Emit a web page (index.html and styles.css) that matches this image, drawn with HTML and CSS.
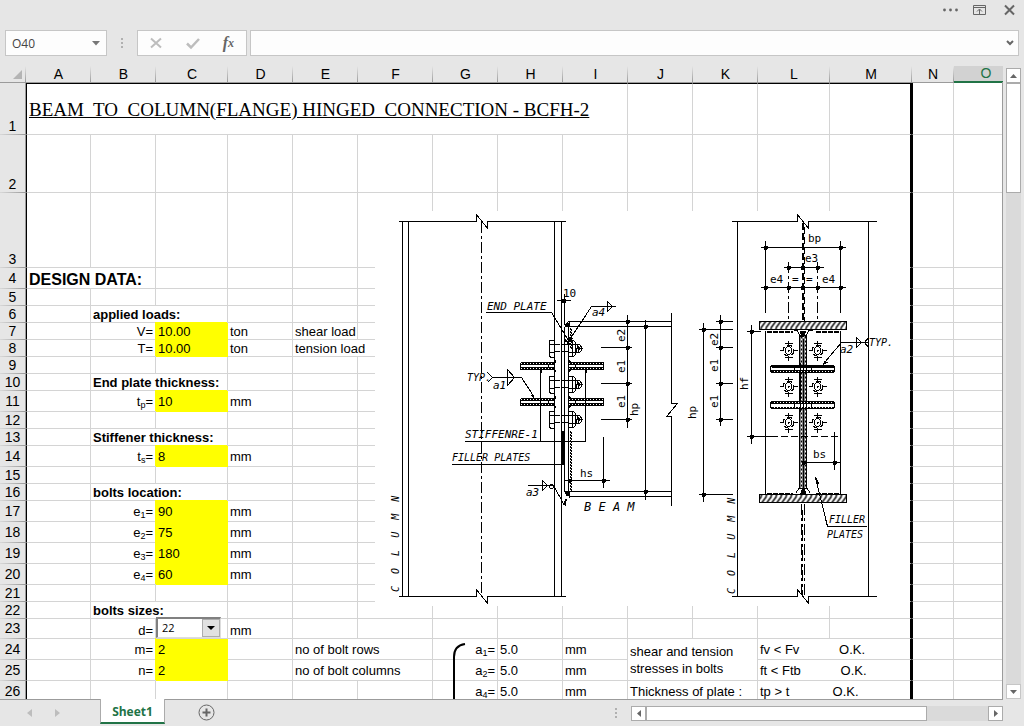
FILE: index.html
```html
<!DOCTYPE html>
<html lang="en">
<head>
<meta charset="utf-8">
<title>Beam to column hinged connection</title>
<link rel="stylesheet" href="styles.css">
</head>
<body>
<header class="titlebar">
  <button class="icon-btn" aria-label="More"><svg width="16" height="16"><g fill="#666"><circle cx="1.500" cy="8" r="1.400"/><circle cx="7.500" cy="8" r="1.400"/><circle cx="13.500" cy="8" r="1.400"/></g></svg></button>
  <button class="icon-btn" aria-label="Ribbon display options"><svg width="16" height="16" fill="none" stroke="#666"><path d="M1.500 3.500h12v9h-12zM1.500 5.500h12M7.500 12V7.500M5 9.500l2.500-2.500L10 9.500"/></svg></button>
  <button class="icon-btn" aria-label="Close"><svg width="16" height="16" fill="none" stroke="#666" stroke-width="2"><path d="M4 3.500l9 9M13 3.500l-9 9"/></svg></button>
</header>

<section class="formula-row">
  <div class="namebox">
    <input class="name-input" aria-label="Name box" value="O40">
    <button class="plain-btn" aria-label="Names"><svg width="8" height="5"><path d="M0 0h8L4 4.500z" fill="#777"/></svg></button>
  </div>
  <svg class="grip" width="2" height="12" fill="#b0b0b0"><path d="M0 1h2v2H0zM0 5h2v2H0zM0 9h2v2H0z"/></svg>
  <div class="fx-group">
    <button class="plain-btn" aria-label="Cancel"><svg width="14" height="14" fill="none" stroke="#bdbdbd" stroke-width="2"><path d="M2 2.500l10 9M12 2.500l-10 9"/></svg></button>
    <button class="plain-btn" aria-label="Enter"><svg width="14" height="14" fill="none" stroke="#bdbdbd" stroke-width="2.500"><path d="M1 7.500l4 4L13 3"/></svg></button>
    <button class="plain-btn fx" aria-label="Insert function">f<small>x</small></button>
  </div>
  <div class="formula">
    <input class="formula-input" aria-label="Formula bar">
    <button class="plain-btn" aria-label="Expand formula bar"><svg width="8" height="6" fill="none" stroke="#666" stroke-width="2"><path d="M1 1l3 3 3-3"/></svg></button>
  </div>
</section>

<main class="workspace">
  <div class="sheet">
    <table class="grid">
      <colgroup>
        <col class="w-head"><col class="w-65"><col class="w-65"><col class="w-72"><col class="w-65"><col class="w-65"><col class="w-75"><col class="w-65"><col class="w-65"><col class="w-65"><col class="w-65"><col class="w-65"><col class="w-72"><col class="w-82"><col class="w-42"><col>
      </colgroup>
      <thead>
        <tr><th class="corner"><svg width="9" height="9"><path d="M9 0v9H0z" fill="#b4b4b4"/></svg></th><th>A</th><th>B</th><th>C</th><th>D</th><th>E</th><th>F</th><th>G</th><th>H</th><th>I</th><th>J</th><th>K</th><th>L</th><th>M</th><th>N</th><th class="active">O</th></tr>
      </thead>
      <tbody>
        <tr class="r-52 first"><th>1</th><td class="a title" colspan="9">BEAM&nbsp; TO&nbsp; COLUMN(FLANGE) HINGED&nbsp; CONNECTION - BCFH-2</td><td></td><td></td><td></td><td class="m"></td><td></td><td></td></tr>
        <tr class="r-58"><th>2</th><td class="a"></td><td></td><td></td><td></td><td></td><td></td><td></td><td></td><td></td><td></td><td></td><td></td><td class="m"></td><td></td><td></td></tr>
        <tr class="r-75"><th>3</th><td class="a"></td><td></td><td></td><td></td><td></td><td></td><td></td><td></td><td></td><td></td><td></td><td></td><td class="m"></td><td></td><td></td></tr>
        <tr class="r-21"><th>4</th><td class="a heading" colspan="2">DESIGN DATA:</td><td></td><td></td><td></td><td></td><td></td><td></td><td></td><td></td><td></td><td></td><td class="m"></td><td></td><td></td></tr>
        <tr><th>5</th><td class="a"></td><td></td><td></td><td></td><td></td><td></td><td></td><td></td><td></td><td></td><td></td><td></td><td class="m"></td><td></td><td></td></tr>
        <tr><th>6</th><td class="a"></td><td class="b" colspan="2">applied loads:</td><td></td><td></td><td></td><td></td><td></td><td></td><td></td><td></td><td></td><td class="m"></td><td></td><td></td></tr>
        <tr><th>7</th><td class="a"></td><td class="r">V=</td><td class="y">10.00</td><td>ton</td><td>shear load</td><td></td><td></td><td></td><td></td><td></td><td></td><td></td><td class="m"></td><td></td><td></td></tr>
        <tr><th>8</th><td class="a"></td><td class="r">T=</td><td class="y">10.00</td><td>ton</td><td colspan="2">tension load</td><td></td><td></td><td></td><td></td><td></td><td></td><td class="m"></td><td></td><td></td></tr>
        <tr><th>9</th><td class="a"></td><td></td><td></td><td></td><td></td><td></td><td></td><td></td><td></td><td></td><td></td><td></td><td class="m"></td><td></td><td></td></tr>
        <tr><th>10</th><td class="a"></td><td class="b" colspan="2">End plate thickness:</td><td></td><td></td><td></td><td></td><td></td><td></td><td></td><td></td><td></td><td class="m"></td><td></td><td></td></tr>
        <tr class="r-21"><th>11</th><td class="a"></td><td class="r">t<sub>p</sub>=</td><td class="y">10</td><td>mm</td><td></td><td></td><td></td><td></td><td></td><td></td><td></td><td></td><td class="m"></td><td></td><td></td></tr>
        <tr><th>12</th><td class="a"></td><td></td><td></td><td></td><td></td><td></td><td></td><td></td><td></td><td></td><td></td><td></td><td class="m"></td><td></td><td></td></tr>
        <tr><th>13</th><td class="a"></td><td class="b" colspan="2">Stiffener thickness:</td><td></td><td></td><td></td><td></td><td></td><td></td><td></td><td></td><td></td><td class="m"></td><td></td><td></td></tr>
        <tr class="r-21"><th>14</th><td class="a"></td><td class="r">t<sub>s</sub>=</td><td class="y">8</td><td>mm</td><td></td><td></td><td></td><td></td><td></td><td></td><td></td><td></td><td class="m"></td><td></td><td></td></tr>
        <tr><th>15</th><td class="a"></td><td></td><td></td><td></td><td></td><td></td><td></td><td></td><td></td><td></td><td></td><td></td><td class="m"></td><td></td><td></td></tr>
        <tr><th>16</th><td class="a"></td><td class="b" colspan="2">bolts location:</td><td></td><td></td><td></td><td></td><td></td><td></td><td></td><td></td><td></td><td class="m"></td><td></td><td></td></tr>
        <tr class="r-21"><th>17</th><td class="a"></td><td class="r">e<sub>1</sub>=</td><td class="y">90</td><td>mm</td><td></td><td></td><td></td><td></td><td></td><td></td><td></td><td></td><td class="m"></td><td></td><td></td></tr>
        <tr class="r-21"><th>18</th><td class="a"></td><td class="r">e<sub>2</sub>=</td><td class="y">75</td><td>mm</td><td></td><td></td><td></td><td></td><td></td><td></td><td></td><td></td><td class="m"></td><td></td><td></td></tr>
        <tr class="r-21"><th>19</th><td class="a"></td><td class="r">e<sub>3</sub>=</td><td class="y">180</td><td>mm</td><td></td><td></td><td></td><td></td><td></td><td></td><td></td><td></td><td class="m"></td><td></td><td></td></tr>
        <tr class="r-21"><th>20</th><td class="a"></td><td class="r">e<sub>4</sub>=</td><td class="y">60</td><td>mm</td><td></td><td></td><td></td><td></td><td></td><td></td><td></td><td></td><td class="m"></td><td></td><td></td></tr>
        <tr><th>21</th><td class="a"></td><td></td><td></td><td></td><td></td><td></td><td></td><td></td><td></td><td></td><td></td><td></td><td class="m"></td><td></td><td></td></tr>
        <tr><th>22</th><td class="a"></td><td class="b" colspan="2">bolts sizes:</td><td></td><td></td><td></td><td></td><td></td><td></td><td></td><td></td><td></td><td class="m"></td><td></td><td></td></tr>
        <tr class="r-20"><th>23</th><td class="a"></td><td class="r"><label for="bolt-size">d=</label></td><td class="holder"><span class="combo"><select id="bolt-size"><option>22</option><option>24</option></select><span class="combo-arrow"><svg width="8" height="4"><path d="M0 0h8L4 4z"/></svg></span></span></td><td>mm</td><td></td><td></td><td></td><td></td><td></td><td></td><td></td><td></td><td class="m"></td><td></td><td></td></tr>
        <tr class="r-21"><th>24</th><td class="a"></td><td class="r">m=</td><td class="y">2</td><td></td><td colspan="2">no of bolt rows</td><td class="r">a<sub>1</sub>=</td><td>5.0</td><td>mm</td><td class="wrap" colspan="2" rowspan="2">shear and tension stresses in bolts</td><td class="m pre" colspan="2">fv &lt; Fv           O.K.</td><td></td><td></td></tr>
        <tr class="r-21"><th>25</th><td class="a"></td><td class="r">n=</td><td class="y">2</td><td></td><td colspan="2">no of bolt columns</td><td class="r">a<sub>2</sub>=</td><td>5.0</td><td>mm</td><td class="m pre" colspan="2">ft &lt; Ftb           O.K.</td><td></td><td></td></tr>
        <tr class="r-21"><th>26</th><td class="a"></td><td></td><td></td><td></td><td></td><td></td><td class="r">a<sub>4</sub>=</td><td>5.0</td><td>mm</td><td colspan="2">Thickness of plate :</td><td class="m pre" colspan="2">tp &gt; t            O.K.</td><td></td><td></td></tr>
      </tbody>
    </table>

    <svg class="brace" width="14" height="60" fill="none" stroke="#000" stroke-width="2"><path d="M12 1C5 2 1 6 1 14V60"/></svg>

    <svg class="drawing" viewBox="375 211 535 395" width="535" height="395" role="img" aria-label="Connection detail">
      <defs>
        <pattern id="hatch" width="5" height="8" patternUnits="userSpaceOnUse"><path d="M-5 8L1 0M0 8L6 0" stroke="#000" stroke-width="1.500"/></pattern>
        <pattern id="weld" width="4" height="4" patternUnits="userSpaceOnUse"><path d="M0 0h2v2H0zM2 2h2v2H2z"/></pattern>
        <g id="dot"><path d="M-2 -1.500h4v3h-4zM-1.500 -2h3v4h-3z" fill="#000" stroke="none"/></g>
        <g id="bolt">
          <path d="M554 -8.500h-4l-1.500 2v13l1.500 2h4zM549 -4h5M549 4h5M554 -4h5M561 -4h7M554 3h5M561 3h7"/>
          <path d="M568 -8h5l2 2v12l-2 2h-5zM568 -4h7M568 4h7M572 -8v16M575 -4h4l2 2v4l-2 2h-4M577 -4l-1 8M578 -3v6M580 -3l-2 6M575 0h7"/>
        </g>
        <g id="hole"><circle r="5.500" stroke-dasharray="5 3"/><ellipse rx="3" ry="4"/><path d="M-9 0h4M5 0h4M-1 0h2M0 -10v4M0 6v4M0 -1v2M-4 -7h8M-4 7h8"/></g>
      </defs>
      <g class="ink" transform="translate(.5 .5)">
        <!-- column, elevation -->
        <path d="M398 221h78v-7l11 14v-7h78M398 596h78v-7l11 14v-7h78M402 221v375M408 221v375M554 221v375M561 221v375"/>
        <path class="centre" d="M481 221v375"/>
        <!-- end plate and beam -->
        <path d="M564 293v31M564 326v165M568 326v165M564 326l4-5h103M564 326h107M564 491h107M568 496h103M564 491l4 5M671 312v91h6l-11 13h5v89"/>
        <path class="solid" d="M564 326l5-5v5zM564 491h5v6z"/>
        <path class="dots" d="M570 327v20M571 328v20M570 430v61M571 431v60"/>
        <path d="M556 300h14"/><path class="solid" d="M561 298h4v4h-4z"/>
        <!-- stiffeners -->
        <path d="M520 362h34M520 369h34M520 362v7M520 364h34M520 367h34M520 398h34M520 405h34M520 398v7M520 400h34M520 403h34"/>
        <path d="M568 362h35v7h-35M568 364h35M568 367h35M575 364v3M568 398h35v7h-35M568 400h35M568 403h35M575 400v3M548 364v3M548 400v3"/>
        <path class="dots" d="M521 363h32M521 368h32M521 399h32M521 404h32M569 363h34M569 368h34M569 399h34M569 404h34"/>
        <path class="solid" d="M552 362l3-3v3zM552 369h3v3zM552 398l3-3v3zM552 405h3v3zM568 362v-3l3 3zM568 369h3l-3 3zM568 398v-3l3 3zM568 405h3l-3 3z"/>
        <use href="#bolt" y="348"/><use href="#bolt" y="384"/><use href="#bolt" y="419"/>
        <!-- leaders -->
        <path d="M485 312h66l17 28M464 441h121M540 368v73M585 368v73M451 464h111M487 372l5 5-5 5M492 377h29l13 20M507 369v16l7-8zM615 306h-24l-23 35M607 301v10l5-5zM527 485h26l11 20M542 480v10l5-5z"/>
        <path class="thick" d="M562 430v34"/><path class="thick dash" d="M564 505l3-14"/>
        <circle cx="551" cy="486" r="2"/>
        <path class="solid" d="M534 399l-4-4 2-2zM567 343l5-5-3-2zM565 338l4 5-5-2zM539 369h3l-1 4zM584 369h3l-1 4z"/>
        <!-- dimensions, elevation -->
        <path d="M627 314v113M600 347h31M600 383h31M600 419h31M645 319v180M564 480h45M603 436v51M703 322v179M698 329h34M698 494h34M720 314v111M715 321h17M715 347h17M715 383h17M715 419h17"/>
        <use href="#dot" x="627" y="321"/><use href="#dot" x="627" y="347"/><use href="#dot" x="627" y="383"/><use href="#dot" x="627" y="419"/>
        <use href="#dot" x="645" y="326"/><use href="#dot" x="645" y="491"/><use href="#dot" x="569" y="480"/><use href="#dot" x="603" y="480"/>
        <use href="#dot" x="703" y="329"/><use href="#dot" x="703" y="494"/>
        <use href="#dot" x="720" y="321"/><use href="#dot" x="720" y="347"/><use href="#dot" x="720" y="383"/><use href="#dot" x="720" y="419"/>
        <!-- column, side view -->
        <path d="M731 221h66v-7l11 14v-7h68M731 596h66v-7l11 14v-7h68M737 221v375M868 221v375"/>
        <path class="dash thick" d="M802 222v98"/><path class="dash" d="M804 226v94"/>
        <path class="centre" d="M801 503v92M802 509v86M804 503v92"/>
        <path d="M760 247h85M765 240v72M840 240v72M783 267h40M760 287h85"/>
        <path class="centre" d="M788 261v59M817 261v59"/>
        <use href="#dot" x="765" y="247"/><use href="#dot" x="840" y="247"/><use href="#dot" x="788" y="267"/><use href="#dot" x="802" y="267"/><use href="#dot" x="817" y="267"/>
        <use href="#dot" x="765" y="287"/><use href="#dot" x="788" y="287"/><use href="#dot" x="802" y="287"/><use href="#dot" x="817" y="287"/><use href="#dot" x="840" y="287"/>
        <!-- flanges and web -->
        <path fill="url(#hatch)" d="M759 321h87v8h-87zM759 494h87v8h-87z"/>
        <path d="M765 330v164M840 330v164M793 330h4l3 7M812 330h-4l-3 7M799 487l-4 6M806 487l4 6"/>
        <path class="weldline" d="M766 331h26M815 331h25M766 493h26M815 493h25"/>
        <path fill="url(#weld)" d="M799 335h7v153h-7z"/><path class="solid" d="M799 330h7l-2 6h-3zM800 493h6l-2-6h-2z"/>
        <path d="M803 338v150"/>
        <!-- side view stiffeners -->
        <path fill="#fff" d="M771 365h62l1 2v3l-1 2h-62l-1-2v-3zM771 401h62l1 2v3l-1 2h-62l-1-2v-3z"/>
        <path d="M770 370h64M770 403h64M794 366v4M811 366v4M794 403v4M811 403v4M800 362v49M803 362v49M806 362v49"/>
        <path class="thick" d="M771 366h62"/><path class="dots" d="M771 371h62M771 402h62M771 407h62"/>
        <use href="#hole" x="788" y="350"/><use href="#hole" x="817" y="350"/><use href="#hole" x="788" y="386"/><use href="#hole" x="817" y="386"/><use href="#hole" x="788" y="422"/><use href="#hole" x="817" y="422"/>
        <path d="M751 324v119M746 331h14M746 436h24M802 462h38M834 431v38M868 342h-27l-17 20M856 337v10l5-5zM868 337l-4 5 4 5M815 477l12 49h39"/>
        <path class="dash" d="M770 436h70"/>
        <path class="solid" d="M822 365l2-5 3 2zM815 476l4 7-3 1z"/>
        <use href="#dot" x="751" y="331"/><use href="#dot" x="751" y="436"/><use href="#dot" x="803" y="462"/><use href="#dot" x="834" y="462"/>
      </g>
      <g class="cad slant">
        <text x="487" y="310">END PLATE</text>
        <text x="465" y="438">STIFFENRE-1</text>
        <text class="narrow" x="452" y="461">FILLER PLATES</text>
        <text class="beam" x="584" y="511">B E A M</text>
        <text class="narrow" x="829" y="523">FILLER</text>
        <text class="narrow" x="827" y="538">PLATES</text>
        <text class="narrow" x="467" y="381">TYP.</text>
        <text class="narrow" x="869" y="346">TYP.</text>
        <text x="493" y="389">a1</text><text x="592" y="316">a4</text><text x="526" y="496">a3</text><text x="840" y="353">a2</text>
        <text class="narrow" transform="translate(399 592) rotate(-90)">C&#160;&#160;O&#160;&#160;L&#160;&#160;U&#160;&#160;M&#160;&#160;N</text>
        <text class="narrow" transform="translate(735 594) rotate(-90)">C&#160;&#160;O&#160;&#160;L&#160;&#160;U&#160;&#160;M&#160;&#160;N</text>
      </g>
      <g class="cad">
        <text x="563" y="297">10</text><text x="580" y="477">hs</text><text x="808" y="242">bp</text><text x="805" y="262">e3</text>
        <text x="770" y="283">e4</text><text x="822" y="283">e4</text><text x="792" y="283">=</text><text x="806" y="283">=</text><text x="813" y="458">bs</text>
        <text transform="translate(625 342) rotate(-90)">e2</text><text transform="translate(625 373) rotate(-90)">e1</text><text transform="translate(625 408) rotate(-90)">e1</text>
        <text transform="translate(638 416) rotate(-90)">hp</text><text transform="translate(696 419) rotate(-90)">hp</text>
        <text transform="translate(718 346) rotate(-90)">e2</text><text transform="translate(718 372) rotate(-90)">e1</text><text transform="translate(718 408) rotate(-90)">e1</text>
        <text transform="translate(748 390) rotate(-90)">hf</text>
      </g>
    </svg>
  </div>
  <div class="vscroll">
    <button class="scroll-btn" aria-label="Scroll up"><svg width="7" height="4"><path d="M0 4h7L3.500 0z" fill="#666"/></svg></button>
    <div class="vthumb"></div>
    <button class="scroll-btn light end" aria-label="Scroll down"><svg width="7" height="4"><path d="M0 0h7L3.500 4z" fill="#666"/></svg></button>
  </div>
</main>

<footer class="bottom">
  <div class="tabs">
    <div class="tab-nav">
      <button class="plain-btn" aria-label="Previous sheet"><svg width="5" height="8"><path d="M5 0v8L0 4z" fill="#bdbdbd"/></svg></button>
      <button class="plain-btn" aria-label="Next sheet"><svg width="5" height="8"><path d="M0 0v8l5-4z" fill="#bdbdbd"/></svg></button>
    </div>
    <button class="tab">Sheet1</button>
    <button class="plain-btn add" aria-label="New sheet"><svg width="17" height="17" fill="none" stroke="#666"><circle cx="8.500" cy="8.500" r="7.500"/><path stroke-width="2" d="M8.500 4.500v8M4.500 8.500h8"/></svg></button>
  </div>
  <svg class="grip" width="2" height="12" fill="#b0b0b0"><path d="M0 1h2v2H0zM0 5h2v2H0zM0 9h2v2H0z"/></svg>
  <div class="hscroll">
    <button class="scroll-btn" aria-label="Scroll left"><svg width="4" height="7"><path d="M4 0v7L0 3.500z" fill="#666"/></svg></button>
    <div class="hthumb"></div>
    <button class="scroll-btn end" aria-label="Scroll right"><svg width="4" height="7"><path d="M0 0v7l4-3.500z" fill="#666"/></svg></button>
  </div>
</footer>
</body>
</html>
```
FILE: styles.css
```css
* { box-sizing: border-box; }

body {
  margin: 0;
  height: 100vh;
  display: flex;
  flex-direction: column;
  overflow: hidden;
  background: #e6e6e6;
  color: #000;
  font-family: "Liberation Sans", Arial, sans-serif;
  font-size: 13px;
}

svg { display: block; }

button, input, select { font: inherit; color: inherit; }

.titlebar {
  height: 30px;
  flex: none;
  display: flex;
  justify-content: flex-end;
  gap: 13px;
  padding: 2px 7px 0 0;
}

.icon-btn, .plain-btn {
  display: flex;
  align-items: center;
  justify-content: center;
  border: 0;
  padding: 0;
  background: none;
}

.icon-btn { width: 16px; height: 16px; }

.formula-row {
  flex: none;
  height: 26px;
  display: flex;
  align-items: stretch;
  padding: 0 5px;
  margin-bottom: 10px;
  font-family: "Open Sans", sans-serif;
  font-size: 12px;
}

.namebox, .fx-group, .formula {
  display: flex;
  align-items: center;
  background: #fdfdfd;
  border: 1px solid #c6c6c6;
}

.namebox { width: 102px; padding: 0 6px; }
.name-input { flex: 1; min-width: 0; border: 0; padding: 0; background: none; color: #444; }
.grip { align-self: center; margin: 0 14px; }
.fx-group { width: 110px; justify-content: space-between; padding: 0 12px 0 11px; }
.fx { font-family: "Liberation Serif", serif; font-style: italic; font-weight: bold; font-size: 16px; color: #666; }
.fx small { font-size: 12px; }
.formula { flex: 1; margin-left: 3px; padding-right: 4px; }
.formula-input { flex: 1; min-width: 0; border: 0; background: none; }

.workspace {
  flex: 1;
  min-height: 0;
  display: flex;
  gap: 3px;
  padding-right: 3px;
}

.sheet { position: relative; flex: 1; min-width: 0; overflow: hidden; }

.sheet::after {
  content: "";
  position: absolute;
  inset: 16px 0 0 auto;
  width: 1px;
  background: #9b9b9b;
}

.grid {
  width: 100%;
  min-width: 1018px;
  table-layout: fixed;
  border-collapse: separate;
  border-spacing: 0;
  background: #fff;
}

.w-head { width: 26px; }
.w-42 { width: 42px; }
.w-65 { width: 65px; }
.w-72 { width: 72px; }
.w-75 { width: 75px; }
.w-82 { width: 82px; }

.grid tr { height: 17px; }
.grid .r-20 { height: 20px; }
.grid .r-21 { height: 21px; }
.grid .r-52 { height: 52px; }
.grid .r-58 { height: 58px; }
.grid .r-75 { height: 75px; }

.grid th {
  padding: 0;
  font-size: 14px;
  font-weight: normal;
  line-height: 16px;
  vertical-align: bottom;
  background: linear-gradient(#e6e6e6, #9b9b9b) right / 1px 100% no-repeat #e6e6e6;
}

.grid thead th { border-bottom: 1px solid #9b9b9b; }
.grid thead .active { background: #d2d2d2; color: #217346; border-bottom: 2px solid #217346; line-height: 15px; }
.grid .corner svg { margin: 0 4px 3px auto; }

.grid tbody th {
  padding-bottom: 1px;
  border-right: 1px solid #9b9b9b;
  background: linear-gradient(to right, #d8d8d8, #9b9b9b) bottom / 100% 1px no-repeat #e6e6e6;
}

.grid .r-21 th, .grid .r-20 th { padding-bottom: 3px; }

.grid td {
  padding: 1px 2px 0;
  line-height: 15px;
  vertical-align: middle;
  white-space: nowrap;
  border-right: 1px solid #d4d4d4;
  border-bottom: 1px solid #d4d4d4;
}

.grid .r-21 td { padding: 0 2px; }
.grid .r-20 td { padding-top: 3px; }

.grid .first td:nth-child(-n+6) { border-top: 1px solid #000; }
.grid .a { border-left: 1px solid #000; }
.grid .m { border-right: 2px solid #000; }
.grid .m + td { border-left: 1px solid #000; }
.grid .r { text-align: right; }
.grid .b { font-weight: bold; }
.grid .y { background: #ff0; border-color: #ff0; box-shadow: -1px -1px 0 #ff0; }
.grid .pre { white-space: pre; }
.grid .r-21 .wrap { white-space: normal; line-height: 17px; }
.grid .title { font-family: "Liberation Serif", "Times New Roman", serif; font-size: 19px; text-decoration: underline; }
.grid .heading { font-size: 16px; font-weight: bold; }
.grid .r-21 .heading { padding-top: 2px; }
.grid sub { font-size: 9px; line-height: 0; vertical-align: -2px; }

.grid .holder { position: relative; }

.combo {
  position: absolute;
  inset: -2px 6px 0 0;
  display: flex;
  background: #fff;
  border: 1px solid #ddd;
  border-top: 2px solid #808080;
  border-left: 2px solid #808080;
}

.combo select {
  appearance: none;
  flex: 1;
  min-width: 0;
  border: 0;
  padding: 0 4px;
  background: none;
  font-family: "Open Sans", sans-serif;
  font-size: 11px;
  line-height: 16px;
}

.combo-arrow {
  width: 18px;
  display: flex;
  align-items: center;
  justify-content: center;
  background: #e1e1e1;
  border: 1px solid #adadad;
}

.brace { position: absolute; left: 453px; top: 577px; }
.drawing { position: absolute; left: 375px; top: 145px; background: #fff; }

.ink { fill: none; stroke: #000; stroke-width: 1; shape-rendering: crispEdges; }
.ink .solid { fill: #000; stroke: none; }
.ink .thick { stroke-width: 2; }
.ink .dash { stroke-dasharray: 7 3; }
.ink .dots { stroke-dasharray: 2 1; }
.ink .weldline { stroke-width: 2; stroke-dasharray: 5 1; }
.ink .centre { stroke-dasharray: 11 3 3 3; }

.cad { font-family: "DejaVu Sans Mono", monospace; font-size: 11px; }
.slant { font-style: italic; }
.cad .narrow { font-size: 10px; }
.cad .beam { font-size: 12px; }

.vscroll {
  width: 15px;
  margin-top: 2px;
  display: flex;
  flex-direction: column;
  background: #dadada;
}

.scroll-btn {
  flex: none;
  width: 15px;
  height: 15px;
  display: flex;
  align-items: center;
  justify-content: center;
  padding: 0;
  background: #fff;
  border: 1px solid #ababab;
}

.light { border-color: #c6c6c6; }
.vthumb { height: 110px; background: #fff; border: 1px solid #ababab; }
.vscroll .end { margin-top: auto; }

.bottom {
  flex: none;
  height: 27px;
  display: flex;
  align-items: flex-start;
  padding-right: 21px;
  background: linear-gradient(#9b9b9b, #9b9b9b) top left / calc(100% - 21px) 1px no-repeat;
}

.tabs { flex: 1; display: flex; align-items: center; }
.tab-nav { width: 100px; display: flex; gap: 23px; padding: 2px 0 0 27px; }

.tab {
  height: 25px;
  width: 65px;
  padding: 1px 0 0;
  background: #fff;
  border: 1px solid #ababab;
  border-top: 0;
  border-bottom: 2px solid #217346;
  color: #217346;
  font-family: "Open Sans", sans-serif;
  font-size: 12px;
  font-weight: bold;
}

.add { margin-left: 33px; padding-top: 2px; }

.hscroll {
  width: 372px;
  margin-top: 7px;
  display: flex;
  background: #dadada;
}

.hthumb { width: 281px; background: #fff; border: 1px solid #ababab; }
.hscroll .end { margin-left: auto; }
```
